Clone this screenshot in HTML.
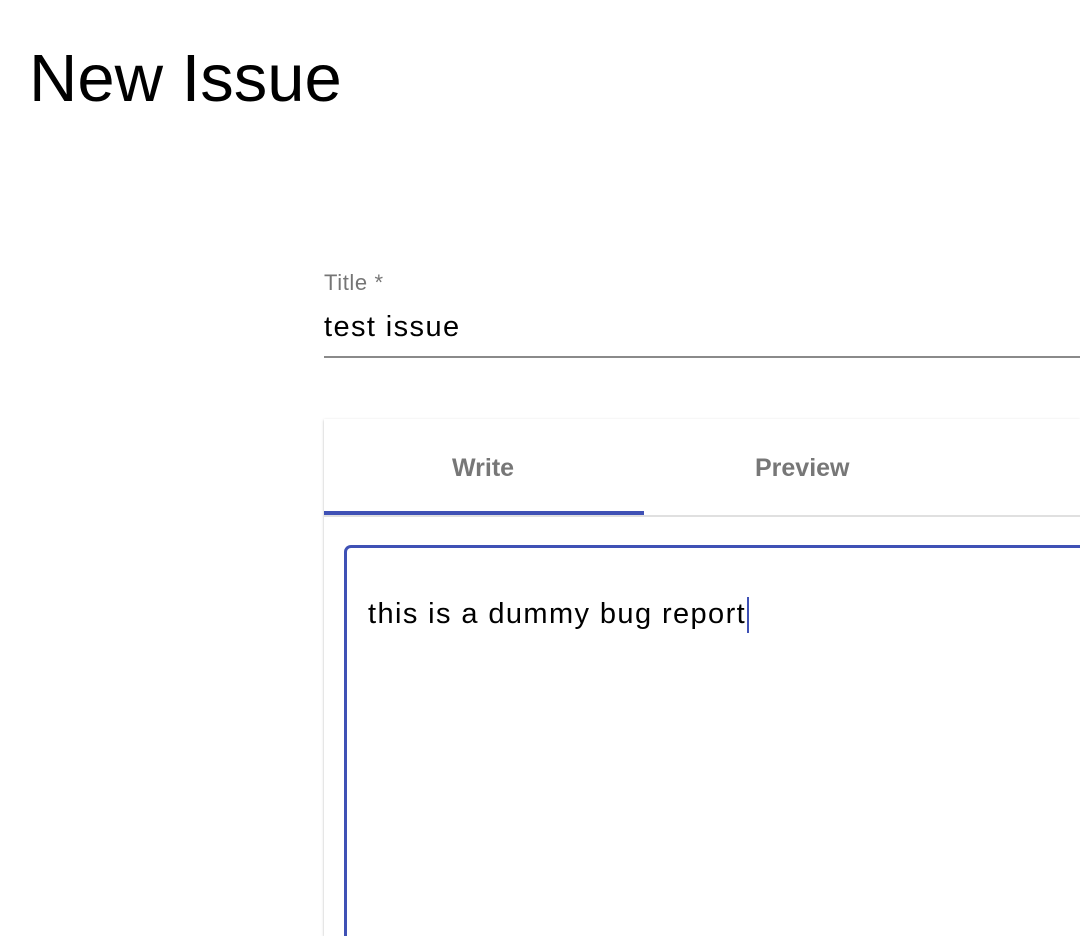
<!DOCTYPE html>
<html><head><style>
html,body{margin:0;width:1080px;height:936px;overflow:hidden;background:#fff}
body{font-family:"Liberation Sans",Arial,sans-serif}
#w{position:relative;width:1080px;height:936px;overflow:hidden}
.h{position:absolute;left:29px;top:45px;font-size:67px;color:#000;line-height:1}
.lab{position:absolute;left:324px;top:270px;font-size:22px;letter-spacing:0.6px;color:rgba(0,0,0,.54)}
.val{position:absolute;left:324px;top:311px;font-size:29px;letter-spacing:1.4px;color:#000}
.line{position:absolute;left:324px;top:356px;width:756px;height:2px;background:#8a8a8a}
.card{position:absolute;left:324px;top:419px;width:756px;height:517px;background:#fff;box-shadow:0 1px 3px rgba(0,0,0,.2),0 1px 1px rgba(0,0,0,.12)}
.tab{position:absolute;top:454px;font-size:25px;font-weight:bold;color:#777}
.ind{position:absolute;left:324px;top:511px;width:320px;height:4px;background:#3f51b5}
.sep{position:absolute;left:324px;top:515px;width:756px;height:2px;background:#e0e0e0}
.ta{position:absolute;left:344px;top:545px;width:736px;height:391px;border:3px solid #3f51b5;border-right:none;border-bottom:none;border-top-left-radius:7px;box-sizing:border-box}
.txt{position:absolute;left:368px;top:598px;font-size:29px;letter-spacing:1.4px;color:#000}
.cur{position:absolute;left:747px;top:597px;width:2px;height:36px;background:#3f51b5}
</style></head><body><div id="w">
<div class="h">New Issue</div>
<div class="lab">Title *</div>
<div class="val">test issue</div>
<div class="line"></div>
<div class="card"></div>
<div class="tab" style="left:452px">Write</div>
<div class="tab" style="left:755px">Preview</div>
<div class="sep"></div>
<div class="ind"></div>
<div class="ta"></div>
<div class="txt">this is a dummy bug report</div>
<div class="cur"></div>
</div></body></html>
